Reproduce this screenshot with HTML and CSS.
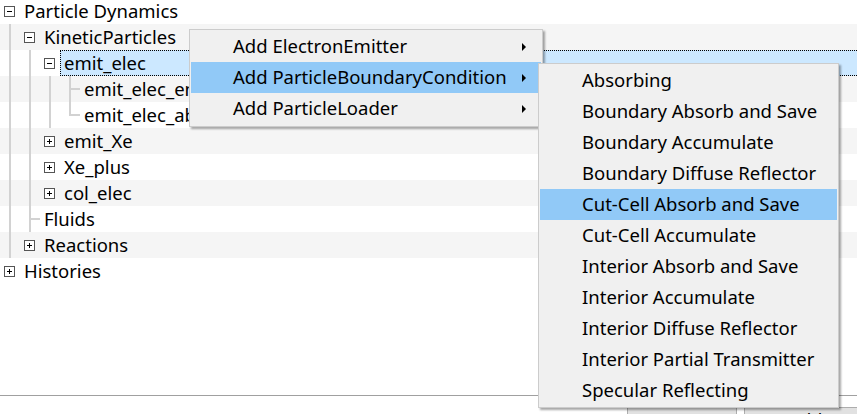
FILE: index.html
```html
<!DOCTYPE html>
<html>
<head>
<meta charset="utf-8">
<link rel="stylesheet" href="styles.css">
</head>
<body>
<div class="app">
  <div class="tree">
    <div class="row first"><span class="col"><span class="box minus"></span></span><span class="label">Particle Dynamics</span></div>
    <div class="row"><span class="col v"></span><span class="col"><span class="box minus"></span></span><span class="label">KineticParticles</span></div>
    <div class="row"><span class="col v"></span><span class="col v"></span><span class="col"><span class="box minus"></span></span><span class="label selected">emit_elec</span></div>
    <div class="row"><span class="col v"></span><span class="col v"></span><span class="col v"></span><span class="col tee"></span><span class="label">emit_elec_emitter</span></div>
    <div class="row"><span class="col v"></span><span class="col v"></span><span class="col v"></span><span class="col end"></span><span class="label">emit_elec_absorber</span></div>
    <div class="row"><span class="col v"></span><span class="col v"></span><span class="col"><span class="box plus"></span></span><span class="label">emit_Xe</span></div>
    <div class="row"><span class="col v"></span><span class="col v"></span><span class="col"><span class="box plus"></span></span><span class="label">Xe_plus</span></div>
    <div class="row"><span class="col v"></span><span class="col v"></span><span class="col"><span class="box plus"></span></span><span class="label">col_elec</span></div>
    <div class="row"><span class="col v"></span><span class="col tee"></span><span class="label">Fluids</span></div>
    <div class="row"><span class="col v"></span><span class="col"><span class="box plus"></span></span><span class="label">Reactions</span></div>
    <div class="row"><span class="col"><span class="box plus"></span></span><span class="label">Histories</span></div>
  </div>
  <div class="buttons">
    <button class="btn btn-remove">Remove</button>
    <button class="btn btn-add">Add</button>
  </div>

  <div class="menu menu-main">
    <div class="item">Add ElectronEmitter<span class="arrow"></span></div>
    <div class="item hl">Add ParticleBoundaryCondition<span class="arrow"></span></div>
    <div class="item">Add ParticleLoader<span class="arrow"></span></div>
  </div>

  <div class="menu menu-sub">
    <div class="item">Absorbing</div>
    <div class="item">Boundary Absorb and Save</div>
    <div class="item">Boundary Accumulate</div>
    <div class="item">Boundary Diffuse Reflector</div>
    <div class="item hl">Cut-Cell Absorb and Save</div>
    <div class="item">Cut-Cell Accumulate</div>
    <div class="item">Interior Absorb and Save</div>
    <div class="item">Interior Accumulate</div>
    <div class="item">Interior Diffuse Reflector</div>
    <div class="item">Interior Partial Transmitter</div>
    <div class="item">Specular Reflecting</div>
  </div>
</div>
</body>
</html>
```

FILE: styles.css
```css
html, body {
  margin: 0;
  padding: 0;
  background: #ffffff;
}

.app {
  position: relative;
  width: 857px;
  height: 414px;
  overflow: hidden;
  font-family: "Noto Sans", "Open Sans", sans-serif;
  font-size: 18.5px;
  color: #000;
}

.tree {
  height: 396px;
  box-sizing: border-box;
  border-bottom: 1px solid #a0a0a0;
  overflow: hidden;
}

.row {
  display: flex;
  height: 26px;
  background: #ffffff;
}

.row.first {
  height: 24px;
}

.row:nth-child(2n) {
  background: #f5f5f5;
}

.col {
  flex: none;
  width: 20px;
  display: flex;
  align-items: center;
}

.row.first .col {
  align-items: flex-start;
  padding-top: 6px;
  box-sizing: border-box;
}

.col.v {
  background: linear-gradient(#d2d2d2, #d2d2d2) 9px 0 / 2px 100% no-repeat;
}

.col.tee {
  background:
    linear-gradient(#d2d2d2, #d2d2d2) 9px 0 / 2px 100% no-repeat,
    linear-gradient(#d2d2d2, #d2d2d2) 11px 12px / 9px 2px no-repeat;
}

.col.end {
  background:
    linear-gradient(#d2d2d2, #d2d2d2) 9px 0 / 2px 14px no-repeat,
    linear-gradient(#d2d2d2, #d2d2d2) 11px 12px / 9px 2px no-repeat;
}

.box {
  width: 11px;
  height: 11px;
  margin-left: 4px;
  box-sizing: border-box;
  border: 1px solid #555555;
}

.box.minus {
  background: linear-gradient(#000, #000) 2px 4px / 5px 1px no-repeat, #ffffff;
}

.box.plus {
  background:
    linear-gradient(#000, #000) 2px 4px / 5px 1px no-repeat,
    linear-gradient(#000, #000) 4px 2px / 1px 5px no-repeat,
    #ffffff;
}

.label {
  padding-left: 4px;
  line-height: 25px;
  padding-bottom: 1px;
  white-space: nowrap;
}

.row.first .label {
  line-height: 21px;
  padding-bottom: 3px;
}

.label.selected {
  flex: 1;
  background: #cce8ff;
  border: 1px dotted #000;
  border-right: 0;
  padding-left: 3px;
  padding-bottom: 0;
  line-height: 23px;
  height: 24px;
}

.buttons {
  display: flex;
  justify-content: flex-end;
  gap: 7px;
  padding-top: 11px;
  margin-right: -10px;
}

.btn {
  flex: none;
  height: 26px;
  box-sizing: border-box;
  background: #e1e1e1;
  border: 1px solid #adadad;
  font-family: "Noto Sans", sans-serif;
  font-size: 18px;
  line-height: 22px;
  padding: 0;
  color: #000;
}

.btn-remove {
  width: 110px;
}

.btn-add {
  width: 123px;
}

.menu {
  position: absolute;
  box-sizing: border-box;
  background: #f0f0f0;
  border: 1px solid #cccccc;
  padding: 1px;
  box-shadow: 2px 2px 2px rgba(0, 0, 0, 0.35);
}

.menu-main {
  left: 189px;
  top: 29px;
  width: 354px;
  padding-bottom: 2px;
}

.menu-sub {
  left: 538px;
  top: 63px;
  width: 301px;
}

.item {
  height: 31px;
  box-sizing: border-box;
  display: flex;
  align-items: center;
  padding-left: 42px;
  padding-bottom: 2px;
  white-space: nowrap;
}

.item.hl {
  background: #91c9f7;
}

.arrow {
  margin-left: auto;
  margin-right: 15px;
  margin-top: 2px;
  width: 0;
  height: 0;
  border-left: 4px solid #000;
  border-top: 4px solid transparent;
  border-bottom: 4px solid transparent;
}
```
